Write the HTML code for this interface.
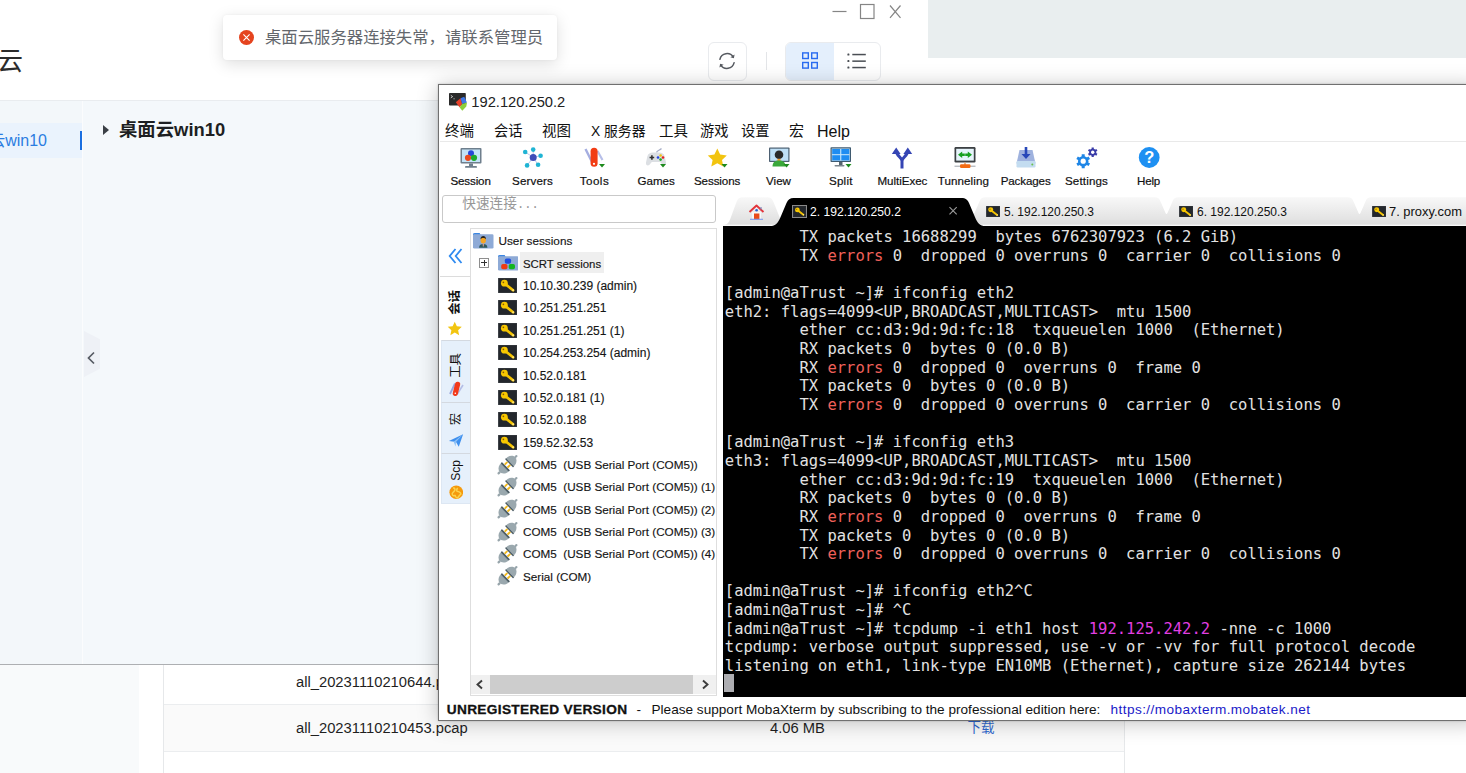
<!DOCTYPE html>
<html lang="zh-CN">
<head>
<meta charset="utf-8">
<title>桌面云</title>
<style>
*{box-sizing:border-box;margin:0;padding:0}
html,body{width:1466px;height:773px;overflow:hidden;background:#fff}
body{position:relative;font-family:"Liberation Sans","Noto Sans CJK SC",sans-serif;color:#222}
.abs{position:absolute}
/* ---------- cloud desktop app (background window) ---------- */
#app{position:absolute;left:0;top:0;width:906px;height:665px;background:#fff;border-bottom:1px solid #adafb2}
#app .hdr{position:absolute;left:0;top:0;width:906px;height:101px;background:#fff;border-bottom:1px solid #e9ecef}
#app .logo{position:absolute;left:-3px;top:43px;font-size:26px;line-height:36px;color:#2b2b2b}
#side{position:absolute;left:0;top:101px;width:83px;height:563px;background:#f3f7fa;border-right:1px solid #fbfcfd}
#side .sel{position:absolute;left:0;top:22px;width:82px;height:35px;background:#eaf3fd}
#side .sel span{position:absolute;right:35px;top:7px;font-size:16px;line-height:22px;color:#2a7de1;white-space:nowrap}
#side .bar{position:absolute;left:79.500px;top:30px;width:2.400px;height:19px;background:#1b6fe0}
#main{position:absolute;left:83px;top:101px;width:823px;height:563px;background:#f4f8fb}
#main .tri{position:absolute;left:20px;top:24px;width:0;height:0;border-left:6px solid #3a3f45;border-top:5px solid transparent;border-bottom:5px solid transparent}
#main .ttl{position:absolute;left:36px;top:16px;font-size:18.39px;font-weight:700;line-height:26px;color:#1d1f22;white-space:nowrap}
#main .handle{position:absolute;left:1px;top:230px;width:16px;height:46px;background:#eef1f6;clip-path:polygon(0 0,100% 18%,100% 82%,0 100%)}
/* toast */
#toast{position:absolute;left:223px;top:15px;width:334px;height:45px;background:#fff;border-radius:4px;box-shadow:0 4px 16px rgba(0,0,0,.13),0 0 3px rgba(0,0,0,.05)}
#toast .ic{position:absolute;left:15.800px;top:15px;width:15px;height:15px;border-radius:50%;background:#e5441f}
#toast .tx{position:absolute;left:42px;top:11px;font-size:16.38px;line-height:23px;color:#63676d;white-space:nowrap}
/* header buttons */
.btn{position:absolute;background:#fff;border:1px solid #e9ebee;border-radius:6px}
#gray{position:absolute;left:928px;top:0;width:538px;height:58px;background:#e9eeef}
/* ---------- bottom table ---------- */
#lpanel{position:absolute;left:0;top:665px;width:139px;height:108px;background:#f8fafb}
#tbl{position:absolute;left:163px;top:665px;width:961.500px;height:108px;border-left:1px solid #e6e8ea;border-right:1px solid #e6e8ea;background:#fff;font-size:14.75px;color:#1f1f1f}
#tbl .r{position:absolute;left:0;width:959.500px;border-bottom:1px solid #ebedef}
#tbl .c{position:absolute;white-space:nowrap;line-height:20px}
/* ---------- MobaXterm ---------- */
#moba{position:absolute;left:438px;top:84px;width:1040px;height:636.600px;background:#fff;border:1px solid #707070;box-shadow:0 2px 20px rgba(0,0,0,.24),0 0 2px rgba(0,0,0,.2)}
#moba .title{position:absolute;left:32.300px;top:7px;font-size:14.7px;line-height:20px;color:#222;white-space:nowrap}
#moba .menu{position:absolute;top:36px;font-size:14.5px;line-height:20px;color:#111;white-space:nowrap}
#moba .msep{position:absolute;left:1px;top:56px;width:1038px;height:1px;background:#e9e9e9}
.tb{position:absolute;top:88px;font-size:11.4px;line-height:16px;color:#111;white-space:nowrap;-webkit-text-stroke:.2px #111}
.tbi{position:absolute;top:61.500px;width:24px;height:22px;margin-left:-12px}
#qc{position:absolute;left:3.200px;top:110px;width:273.800px;height:28px;border:1px solid #c9c9c9;border-radius:3px;background:#fff}
#qc span{position:absolute;left:19px;top:0px;font-family:"Liberation Mono","Noto Sans CJK SC",monospace;font-size:13.600px;line-height:18px;color:#979797;white-space:nowrap;letter-spacing:.1px}
#qc span i{font-style:normal;font-size:12.100px;letter-spacing:0;margin-left:0}
#tree{position:absolute;left:31px;top:143px;width:247px;height:468px;border:1px solid #dedede;background:#fff;overflow:hidden}
#tree .row{position:absolute;left:0;height:22px;width:260px;font-size:11.6px;line-height:22px;color:#151515;white-space:nowrap;-webkit-text-stroke:.15px #151515}
#tree .row .t{position:absolute;left:53px;top:0}
#tree .row .i{position:absolute;left:27.300px;top:3px;width:19.200px;height:15px}
#term{position:absolute;left:284px;top:140.500px;width:760px;height:471.700px;background:#000;overflow:hidden}
#term pre{position:absolute;left:1.800px;top:2.500px;font-family:"DejaVu Sans Mono","Liberation Mono",monospace;font-size:15.5px;line-height:18.66px;color:#e2e2e2;white-space:pre}
#term .r{color:#f0605a}
#term .m{color:#e23ee2}
#term .cur{background:#adadb1;position:relative;top:-1.500px;left:-.5px}
#status{position:absolute;left:0;top:615.800px;height:18px;color:#111;white-space:nowrap}
#status>*{position:absolute;top:0;line-height:18px}
#status a{color:#1a1ac8;text-decoration:none}
#status b{-webkit-text-stroke:.3px #111}
/* tabs */
#tabs{position:absolute;left:280px;top:110px;width:760px;height:32px;background:#fff}
#tabs .tt{position:absolute;top:9px;font-size:12.1px;line-height:16px;color:#111;white-space:nowrap}
#tabs .ki{position:absolute;top:11px;width:14.200px;height:11px}
/* vertical tabs */
#vtabs{position:absolute;left:1px;top:144px;width:30px;height:467px}
.vt{position:absolute;left:0.500px;width:30px;background:#e6f0fb;border:1px solid #dde7f3;border-top-color:#d4d9e0}
.vtx{position:absolute;left:14.5px;font-size:12px;line-height:14px;color:#111;white-space:nowrap;transform-origin:0 0;transform:rotate(-90deg) translate(-100%,-50%)}
</style>
</head>
<body>
<div id="app">
  <div class="hdr"><div class="logo">云</div></div>
  <div id="side">
    <div class="sel"><span>桌面云win10</span></div>
    <div class="bar"></div>
  </div>
  <div id="main">
    <div class="tri"></div><div class="ttl">桌面云win10</div>
    <div class="handle"></div>
    <svg class="abs" style="left:3px;top:249.200px" width="10" height="16" viewBox="0 0 10 16"><path d="M8 2.500 L2.500 8 L8 13.500" fill="none" stroke="#565b63" stroke-width="1.700"/></svg>
  </div>
  <div class="btn" style="left:708px;top:42px;width:39px;height:39px">
    <svg class="abs" style="left:8.200px;top:7.600px" width="20" height="20" viewBox="0 0 20 20" fill="none" stroke="#565a60" stroke-width="1.500" stroke-linecap="round"><path d="M2.900 8.300A7.300 7.300 0 0 1 16.300 6.200"/><path d="M17.100 11.700A7.300 7.300 0 0 1 3.700 13.800"/><path d="M17.600 3.600l-.7 3.600-3.500-1z" fill="#565a60" stroke="none"/><path d="M2.400 16.400l.7-3.600 3.500 1z" fill="#565a60" stroke="none"/></svg>
  </div>
  <div class="abs" style="left:765.500px;top:52px;width:1px;height:18px;background:#e3e5e8"></div>
  <div class="btn" style="left:785px;top:42px;width:96px;height:39px;overflow:hidden">
    <div class="abs" style="left:0;top:0;width:48px;height:37px;background:#e4effc"></div>
    <svg class="abs" style="left:15px;top:8px" width="20" height="20" viewBox="0 0 20 20" fill="none" stroke="#2a6cf0" stroke-width="1.400"><rect x="1.700" y="1.900" width="5.600" height="5.600"/><rect x="10.700" y="1.900" width="5.600" height="5.600"/><rect x="1.700" y="11.500" width="5.600" height="5.600"/><rect x="10.700" y="11.500" width="5.600" height="5.600"/></svg>
    <svg class="abs" style="left:61px;top:8px" width="20" height="20" viewBox="0 0 20 20" fill="#4a4e54"><rect x="0.400" y="2.500" width="2" height="2" rx=".6"/><rect x="5.300" y="2.800" width="13.500" height="1.500"/><rect x="0.400" y="9.100" width="2" height="2" rx=".6"/><rect x="5.300" y="9.400" width="13.500" height="1.500"/><rect x="0.400" y="15.500" width="2" height="2" rx=".6"/><rect x="5.300" y="15.800" width="13.500" height="1.500"/></svg>
  </div>
  <svg class="abs" style="left:828px;top:0" width="80" height="24" viewBox="0 0 80 24" fill="none" stroke="#858585" stroke-width="1.200"><path d="M4.500 11.500h14"/><rect x="32.500" y="4.500" width="13.500" height="14"/><path d="M62 5.500l10.500 12.300M72.500 5.500l-10.500 12.300"/></svg>
</div>
<div id="gray"></div>
<div id="toast"><div class="ic"><svg width="15" height="15" viewBox="0 0 15 15" style="position:absolute;left:0;top:0"><path d="M4.400 4.400l6.200 6.200M10.600 4.400l-6.200 6.200" stroke="#fff" stroke-width="1.100" fill="none"/></svg></div><div class="tx">桌面云服务器连接失常，请联系管理员</div></div>
<div id="lpanel"></div>
<div id="tbl">
  <div class="r" style="top:0;height:40px"></div>
  <div class="r" style="top:40px;height:47px;background:#fafafa"></div>
  <div class="c" style="left:132px;top:7px">all_20231110210644.pcap</div>
  <div class="c" style="left:132px;top:53px">all_20231110210453.pcap</div>
  <div class="c" style="left:606px;top:53px">4.06 MB</div>
  <div class="c" style="left:803.500px;top:53px;color:#3069cf;font-size:13.500px">下载</div>
</div>
<div id="moba">
<svg class="abs" style="left:9.500px;top:7.500px" width="19" height="19" viewBox="0 0 19 19"><rect x="0" y="0" width="16.800" height="12.600" rx=".8" fill="#2a2a2a"/><path d="M1.800 2.300l1.800 1.300-1.800 1.300" stroke="#eee" stroke-width=".8" fill="none"/><path d="M4.300 5.800h1.600" stroke="#bbb" stroke-width=".7"/><path d="M6.800 9.300L11.500 5.300L13.200 11L10.500 14.300Z" fill="#e8402a"/><path d="M11.500 5.300L15.200 3.800L18 9.600L13.200 11Z" fill="#3f78e6"/><path d="M10.500 14.300L13.200 11L18 9.600L17.300 13.500L13.300 17.800Z" fill="#8ccf3c"/></svg><div class="title">192.120.250.2</div>
<div class="menu" style="left:6px;font-size:14.5px">终端</div><div class="menu" style="left:55px;font-size:14.25px">会话</div><div class="menu" style="left:103px;font-size:14.5px">视图</div><div class="menu" style="left:152px;font-size:13.82px">X 服务器</div><div class="menu" style="left:220px;font-size:14.5px">工具</div><div class="menu" style="left:261px;font-size:14.25px">游戏</div><div class="menu" style="left:302px;font-size:14.25px">设置</div><div class="menu" style="left:350px;font-size:15.0px">宏</div><div class="menu" style="left:378px;font-size:16.04px">Help</div>
<div class="msep"></div>
<div class="tb" style="left:11.5px;font-size:11.6px;letter-spacing:-0.153px">Session</div><svg class="tbi" style="left:31.6px" viewBox="0 0 24 22"><rect x="1.500" y="1" width="21" height="15.500" rx="1" fill="#6f7f8d"/><rect x="3" y="2.500" width="18" height="12.500" fill="#c3e3f8"/><rect x="10" y="16.500" width="4" height="2.800" fill="#6f7f8d"/><rect x="6" y="19" width="12" height="1.800" rx=".9" fill="#6f7f8d"/><circle cx="12" cy="6.300" r="3" fill="#2746d8"/><circle cx="9" cy="10.800" r="3.100" fill="#ea4a1f"/><circle cx="15" cy="10.800" r="3.100" fill="#1faa2b"/></svg>
<div class="tb" style="left:73px;font-size:11.6px;letter-spacing:0.148px">Servers</div><svg class="tbi" style="left:93.5px" viewBox="0 0 24 22"><g stroke="#b4bfe8" stroke-width=".9"><path d="M12.200 10.400L4.200 5M12.200 10.400L12.200 2.600M12.200 10.400L19.600 8.700M12.200 10.400L17.100 17.800M12.200 10.400L6.100 18.400"/></g><circle cx="12.200" cy="10.400" r="3.500" fill="#3f4db8"/><circle cx="4.200" cy="5" r="2.300" fill="#1fb4d4"/><circle cx="12.200" cy="2.600" r="2.300" fill="#1fb4d4"/><circle cx="19.600" cy="8.700" r="2.300" fill="#1fb4d4"/><circle cx="17.100" cy="17.800" r="2.300" fill="#1fb4d4"/><circle cx="6.100" cy="18.400" r="2.300" fill="#1fb4d4"/></svg>
<div class="tb" style="left:140.7px;font-size:11.6px;letter-spacing:0.484px">Tools</div><svg class="tbi" style="left:155.45px" viewBox="0 0 24 22"><path d="M3.500 2l6.500 13" stroke="#a5aee0" stroke-width="2.400"/><path d="M15.500 4l5 9" stroke="#b7bfe8" stroke-width="2.200"/><rect x="8.600" y="0.800" width="7" height="19" rx="3.500" fill="#f23c14"/><circle cx="12" cy="16.800" r="1.100" fill="#fff"/><path d="M17 17h6l-3 3.500z" fill="#1d8a1d"/></svg>
<div class="tb" style="left:198.6px;font-size:11.6px;letter-spacing:-0.058px">Games</div><svg class="tbi" style="left:217.15px" viewBox="0 0 24 22"><path d="M12.500 5.500c.5-2 3-2 5-4" stroke="#aab0c8" stroke-width="1.300" fill="none"/><path d="M3.300 9.500c.8-3 3-4 5.500-4h6.400c2.500 0 4.700 1 5.500 4l1.300 6c.5 2.500-1.800 4-3.500 2.200l-2.300-2.700h-8.400l-2.300 2.700c-1.700 1.800-4 .3-3.500-2.200z" fill="#dcdfe3"/><path d="M5.600 10.500h4.600M7.900 8.200v4.600" stroke="#333" stroke-width="1.600"/><circle cx="14" cy="10.500" r="1.300" fill="#2346e0"/><circle cx="16.600" cy="8.500" r="1.300" fill="#f1c40f"/><circle cx="19" cy="10.500" r="1.300" fill="#e6221e"/><circle cx="16.600" cy="12.600" r="1.300" fill="#1fa82a"/><path d="M16 17h6l-3 3.500z" fill="#1d8a1d"/></svg>
<div class="tb" style="left:255px;font-size:11.6px;letter-spacing:-0.109px">Sessions</div><svg class="tbi" style="left:278.1px" viewBox="0 0 24 22"><path d="M12.300 1.500l2.900 6.100 6.600.8-4.800 4.600 1.300 6.600-6-3.400-6 3.400 1.300-6.600-4.800-4.600 6.600-.8z" fill="#f2c40f"/><path d="M16.5 17h6l-3 3.500z" fill="#1d8a1d"/></svg>
<div class="tb" style="left:327px;font-size:11.6px;letter-spacing:0.016px">View</div><svg class="tbi" style="left:339.5px" viewBox="0 0 24 22"><rect x="2" y="0.500" width="20.500" height="14.500" rx=".8" fill="#4d6072"/><rect x="3.200" y="1.700" width="18.100" height="12.100" fill="#bfe0f7"/><circle cx="12" cy="7.800" r="4.300" fill="#2a2a2a"/><path d="M10.500 11.800h3v2.500h-3z" fill="#f09a2a"/><path d="M5.500 19.500c0-4.500 3-6 6.500-6s6.500 1.500 6.500 6z" fill="#3aa83a"/><path d="M16.5 17h6l-3 3.500z" fill="#1d8a1d"/></svg>
<div class="tb" style="left:390px;font-size:11.6px;letter-spacing:0.207px">Split</div><svg class="tbi" style="left:401.8px" viewBox="0 0 24 22"><rect x="1.500" y="0.300" width="20.500" height="14.700" rx=".8" fill="#3f5a70"/><rect x="2.700" y="1.500" width="18.100" height="12.300" fill="#cdeafc"/><rect x="3.200" y="2" width="8" height="5.200" fill="#1e8df2"/><rect x="12.300" y="2" width="8" height="5.200" fill="#1e8df2"/><rect x="3.200" y="8.200" width="8" height="5.200" fill="#1e8df2"/><rect x="12.300" y="8.200" width="8" height="5.200" fill="#1e8df2"/><rect x="10" y="15" width="3.500" height="3.500" fill="#56646e"/><rect x="5.500" y="18" width="10" height="1.600" rx=".8" fill="#7c868d"/><path d="M16.5 17h6l-3 3.500z" fill="#1d8a1d"/></svg>
<div class="tb" style="left:438.5px;font-size:11.6px;letter-spacing:-0.042px">MultiExec</div><svg class="tbi" style="left:463.45px" viewBox="0 0 24 22"><path d="M12 21.500v-8.500M12 14c0-4-5.800-4.500-5.800-10.500M12 14c0-4 5.800-4.500 5.800-10.500" stroke="#3545b4" stroke-width="3" fill="none"/><path d="M1.800 7l4.400-6.500 4.400 6.500z" fill="#3545b4"/><path d="M13.400 7l4.400-6.500 4.400 6.500z" fill="#3545b4"/></svg>
<div class="tb" style="left:498.7px;font-size:11.6px;letter-spacing:0.087px">Tunneling</div><svg class="tbi" style="left:525.85px" viewBox="0 0 24 22"><rect x="1.500" y="0" width="21" height="15.500" rx="1.200" fill="#3c4044"/><rect x="3.200" y="1.800" width="17.600" height="11.800" fill="#e6f4fb"/><path d="M5 7.800l4.200-3.300v2.100h2.600v2.400h-2.600v2.100z" fill="#18a020"/><path d="M19 7.800l-4.200-3.300v2.100h-2.600v2.400h2.600v2.100z" fill="#18a020"/><rect x="11.200" y="15.500" width="1.600" height="2.500" fill="#e8a06a"/><rect x="1.500" y="18.600" width="21" height="1.300" fill="#b4b9be"/><rect x="7" y="17.300" width="10.500" height="3.700" rx="1.200" fill="#f26a12"/></svg>
<div class="tb" style="left:561.7px;font-size:11.6px;letter-spacing:-0.13px">Packages</div><svg class="tbi" style="left:586.65px" viewBox="0 0 24 22"><path d="M5.500 3h13l3 13.500h-19z" fill="#9fb2de"/><rect x="2.500" y="14" width="19" height="6.500" rx="1.200" fill="#c3dcf0"/><circle cx="18.300" cy="17.500" r="1" fill="#6cc04a"/><path d="M10.700 0h2.600v7h3.200l-4.500 5-4.500-5h3.200z" fill="#2848b8"/></svg>
<div class="tb" style="left:626px;font-size:11.6px;letter-spacing:0.136px">Settings</div><svg class="tbi" style="left:647.5px" viewBox="0 0 24 22"><g fill="#1e86e6"><circle cx="8.200" cy="14.200" r="5.200"/><g stroke="#1e86e6" stroke-width="3"><path d="M8.200 7.200v14M2.100 10.700l12.200 7M2.100 17.700l12.200-7"/></g></g><circle cx="8.200" cy="14.200" r="2.600" fill="#fff"/><g fill="#3a3ca8"><circle cx="17.700" cy="5.300" r="3.500"/><g stroke="#3a3ca8" stroke-width="2.200"><path d="M17.700 .5v9.600M13.500 2.900l8.400 4.800M13.500 7.700l8.400-4.800"/></g></g><circle cx="17.700" cy="5.300" r="1.700" fill="#fff"/></svg>
<div class="tb" style="left:698px;font-size:11.6px;letter-spacing:-0.214px">Help</div><svg class="tbi" style="left:709.5px" viewBox="0 0 24 22"><circle cx="12.200" cy="10.500" r="10.400" fill="#1e90f2"/><text x="12.200" y="16.300" text-anchor="middle" font-family="Liberation Sans, sans-serif" font-weight="700" font-size="16.500" fill="#fff">?</text></svg>

<div id="qc"><span>快速连接<i>...</i></span></div>
<div id="tabs">
<svg class="abs" style="left:0;top:0" width="760" height="32" viewBox="0 0 760 32">
<defs><linearGradient id="tg2" x1="0" y1="0" x2="0" y2="1"><stop offset="0" stop-color="#f8f8f8"/><stop offset="1" stop-color="#dedede"/></linearGradient></defs>
<path d="M5.500 30 C9.500 29 10.500 26 12 22 L17.500 7 C19 3.500 20.500 2.200 23.500 2.200 L48.500 2.200 C51.500 2.200 53 3.500 54.500 7 L60.500 22 C62 26 63.500 29 67.500 30 Z" fill="url(#tg2)"/>
<rect x="245" y="2.200" width="515" height="27.800" fill="url(#tg2)"/>
<path d="M242.5 1.500 L242.5 2.200 C246.5 2.200 247.5 4 248.5 6.500 L253.5 18 Q254.5 20 255.5 18 L260.5 6.500 C261.5 4 262.5 2.200 266.5 2.200 L266.5 1.500 Z" fill="#fff"/><path d="M435.5 1.500 L435.5 2.200 C439.5 2.200 440.5 4 441.5 6.500 L446.5 18 Q447.5 20 448.5 18 L453.5 6.500 C454.5 4 455.5 2.200 459.5 2.200 L459.5 1.500 Z" fill="#fff"/><path d="M628.5 1.500 L628.5 2.200 C632.5 2.200 633.5 4 634.5 6.500 L639.5 18 Q640.5 20 641.5 18 L646.5 6.500 C647.5 4 648.5 2.200 652.5 2.200 L652.5 1.500 Z" fill="#fff"/>
<rect x="4" y="29.600" width="756" height="1" fill="#f4f4f4"/>
<path d="M53 31 C58 30 60 26 62 21 L67.500 8 C69 4.500 71 3 74.500 3 L242.500 3 C246.500 3 248.500 4.500 250 8 L255.500 21 C257.500 26 259.500 30 264.500 31 L264.500 32 L53 32 Z" fill="#000"/>
<path d="M230.500 12.200l7.200 7.200M237.700 12.200l-7.200 7.200" stroke="#9c9c9c" stroke-width="1.100"/>
</svg>
<svg class="abs" style="left:28.500px;top:8.500px" width="17" height="17" viewBox="0 0 17 17"><path d="M1.500 8L8.500 1.500l7 6.500" fill="none" stroke="#e2343a" stroke-width="1.900" stroke-linejoin="round"/><path d="M13 3v2.500" stroke="#7b8cc0" stroke-width="1.200"/><rect x="4" y="8" width="9" height="7" fill="#f7f7f7"/><rect x="6" y="9.500" width="5.400" height="6" fill="#ea4a1a"/><circle cx="8.600" cy="6.300" r="1.300" fill="#2a60d0"/><path d="M2 15.300h13" stroke="#7f9cf0" stroke-width="1.100"/></svg>
<svg class="ki" style="left:73.29999999999995px;top:10px;width:15.200px;height:13px;border:1px solid #8a8a8a" viewBox="0 0 19 15"><rect width="19" height="15" fill="#3a3e44"/><rect x=".6" y=".6" width="17.800" height="13.800" fill="#23272c"/><path d="M8 6.800L15 12.200" stroke="#f5c400" stroke-width="2.700" stroke-linecap="round"/><circle cx="6.300" cy="5.200" r="3.400" fill="#f8c800"/><circle cx="5.300" cy="4.300" r=".85" fill="#8a5a00"/><circle cx="15" cy="12.200" r="1" fill="#ffe680"/></svg><span class="tt" style="left:91px;color:#fff;font-size:12.12px">2. 192.120.250.2</span>
<svg class="ki" style="left:267px" viewBox="0 0 19 15"><rect width="19" height="15" fill="#3a3e44"/><rect x=".6" y=".6" width="17.800" height="13.800" fill="#23272c"/><path d="M8 6.800L15 12.200" stroke="#f5c400" stroke-width="2.700" stroke-linecap="round"/><circle cx="6.300" cy="5.200" r="3.400" fill="#f8c800"/><circle cx="5.300" cy="4.300" r=".85" fill="#8a5a00"/><circle cx="15" cy="12.200" r="1" fill="#ffe680"/></svg><span class="tt" style="left:285px;font-size:11.99px">5. 192.120.250.3</span>
<svg class="ki" style="left:460px" viewBox="0 0 19 15"><rect width="19" height="15" fill="#3a3e44"/><rect x=".6" y=".6" width="17.800" height="13.800" fill="#23272c"/><path d="M8 6.800L15 12.200" stroke="#f5c400" stroke-width="2.700" stroke-linecap="round"/><circle cx="6.300" cy="5.200" r="3.400" fill="#f8c800"/><circle cx="5.300" cy="4.300" r=".85" fill="#8a5a00"/><circle cx="15" cy="12.200" r="1" fill="#ffe680"/></svg><span class="tt" style="left:478px;font-size:11.99px">6. 192.120.250.3</span>
<svg class="ki" style="left:653px" viewBox="0 0 19 15"><rect width="19" height="15" fill="#3a3e44"/><rect x=".6" y=".6" width="17.800" height="13.800" fill="#23272c"/><path d="M8 6.800L15 12.200" stroke="#f5c400" stroke-width="2.700" stroke-linecap="round"/><circle cx="6.300" cy="5.200" r="3.400" fill="#f8c800"/><circle cx="5.300" cy="4.300" r=".85" fill="#8a5a00"/><circle cx="15" cy="12.200" r="1" fill="#ffe680"/></svg><span class="tt" style="left:670px;font-size:12.92px">7. proxy.com</span>
</div>
<div id="vtabs">
<svg class="abs" style="left:8px;top:18px" width="16" height="18" viewBox="0 0 16 18" fill="none" stroke="#2e8af0" stroke-width="1.800"><path d="M7.500 2L1.700 9l5.800 7M13.500 2L7.700 9l5.800 7"/></svg>
<div class="abs" style="left:0;top:47px;width:30px;height:1px;background:#dcdcdc"></div>
<div class="vtx" style="top:60.500px;font-weight:700;font-size:12.400px">会话</div>
<svg class="abs" style="left:6.800px;top:92px" width="15.500" height="15.500" viewBox="0 0 17 17"><path d="M8.500 .8l2.300 5 5.400.6-4 3.700 1.100 5.400-4.800-2.800-4.800 2.800 1.100-5.400-4-3.700 5.400-.6z" fill="#f2c511"/></svg>
<div class="vt" style="top:111px;height:63px"></div>
<div class="vtx" style="top:124px;left:15.500px;font-size:12.400px">工具</div>
<svg class="abs" style="left:6px;top:150px" width="20" height="20" viewBox="0 0 20 20"><path d="M4 15L9 4.500" stroke="#9aa6dc" stroke-width="1.800"/><path d="M11 15.500L17 6" stroke="#b4bde6" stroke-width="1.600"/><rect x="7.800" y="2.500" width="5.200" height="14.500" rx="2.600" fill="#f2391a" transform="rotate(14 10 10)"/><circle cx="9.300" cy="14.300" r=".8" fill="#fff"/></svg>
<div class="vt" style="top:173px;height:52px"></div>
<div class="vtx" style="top:184px;left:15.500px">宏</div>
<svg class="abs" style="left:8px;top:204px" width="16" height="15" viewBox="0 0 20 19"><path d="M1 10L19 1.500l-5.500 16-3.500-6z" fill="#3f90ee"/><path d="M19 1.500L10 11.500l-.5 5.500L7 11z" fill="#8cc0f6"/></svg>
<div class="vt" style="top:224px;height:50.500px"></div>
<div class="vtx" style="top:231px;left:15.500px">Scp</div>
<svg class="abs" style="left:8.500px;top:256px" width="14.500" height="14.500" viewBox="0 0 18 18"><circle cx="9" cy="9" r="8.500" fill="#f59a0c"/><path d="M5 4c2-1 3 1 2 3s-3 2-3 4 2 3 3 2 1 3 3 3 2-3 4-4-1-4-3-4-2-3 0-4" fill="none" stroke="#fbd34d" stroke-width="1.900"/></svg>
</div>
<div id="tree">
<div class="row" style="top:1.3px"><svg class="i" style="left:2.300px;top:1.700px;width:20.500px;height:17px" viewBox="0 0 21 17"><path d="M0 3a2 2 0 0 1 2-2.300h4.800l1.400 2.800h-8.200z" fill="#3a86e2"/><rect x="0" y="2.200" width="21" height="14.500" rx="1.300" fill="#8eaad6"/><path d="M6.200 15.800c.3-2.800 1.800-3.600 4.300-3.600s4 .8 4.300 3.600z" fill="#2f5a5e"/><path d="M9.900 11.800h1.200l-.2 2.800h-.8z" fill="#f4a6a0"/><ellipse cx="10.500" cy="8.300" rx="2.700" ry="3.300" fill="#f5a524"/><path d="M7.700 7.300c0-2.400 1.300-3.300 2.800-3.300s2.800.9 2.800 3.300c-.8-1-1.700-1.300-2.800-1.300s-2 .3-2.800 1.300z" fill="#2b2620"/></svg><span class="t" style="left:27.500px;font-size:11.750px">User sessions</span></div>
<div class="row" style="top:23.67px"><span class="abs" style="left:7.800px;top:5px;width:10.500px;height:10.500px;border:1px solid #8e8e8e;background:#fff"></span><span class="abs" style="left:10px;top:9.750px;width:6px;height:1px;background:#333"></span><span class="abs" style="left:12.500px;top:7.250px;width:1px;height:6px;background:#333"></span><svg class="i" style="left:26.800px;top:1.700px;width:20.500px;height:17px" viewBox="0 0 21 17"><path d="M0 3a2 2 0 0 1 2-2.300h4.800l1.400 2.800h-8.200z" fill="#3a86e2"/><rect x="0" y="2.200" width="21" height="14.500" rx="1.300" fill="#8eaad6"/><rect x="7" y="4.300" width="6.400" height="5.500" rx="1.800" fill="#1f4fe0"/><rect x="3.300" y="10" width="6.400" height="5.500" rx="1.800" fill="#ee3a12"/><rect x="11" y="10" width="6.400" height="5.500" rx="1.800" fill="#12b51e"/></svg><span class="abs" style="left:49px;top:-1px;width:84px;height:21.500px;background:#efefef"></span><span class="t" style="left:52px;font-size:11.400px">SCRT sessions</span></div>
<div class="row" style="top:46.04px"><svg class="i" style="" viewBox="0 0 19 15"><rect width="19" height="15" fill="#3a3e44"/><rect x=".6" y=".6" width="17.800" height="13.800" fill="#23272c"/><path d="M8 6.800L15 12.200" stroke="#f5c400" stroke-width="2.700" stroke-linecap="round"/><circle cx="6.300" cy="5.200" r="3.400" fill="#f8c800"/><circle cx="5.300" cy="4.300" r=".85" fill="#8a5a00"/><circle cx="15" cy="12.200" r="1" fill="#ffe680"/></svg><span class="t" style="left:52px;font-size:12px">10.10.30.239 (admin)</span></div>
<div class="row" style="top:68.41px"><svg class="i" style="" viewBox="0 0 19 15"><rect width="19" height="15" fill="#3a3e44"/><rect x=".6" y=".6" width="17.800" height="13.800" fill="#23272c"/><path d="M8 6.800L15 12.200" stroke="#f5c400" stroke-width="2.700" stroke-linecap="round"/><circle cx="6.300" cy="5.200" r="3.400" fill="#f8c800"/><circle cx="5.300" cy="4.300" r=".85" fill="#8a5a00"/><circle cx="15" cy="12.200" r="1" fill="#ffe680"/></svg><span class="t" style="left:52px;font-size:12px">10.251.251.251</span></div>
<div class="row" style="top:90.78px"><svg class="i" style="" viewBox="0 0 19 15"><rect width="19" height="15" fill="#3a3e44"/><rect x=".6" y=".6" width="17.800" height="13.800" fill="#23272c"/><path d="M8 6.800L15 12.200" stroke="#f5c400" stroke-width="2.700" stroke-linecap="round"/><circle cx="6.300" cy="5.200" r="3.400" fill="#f8c800"/><circle cx="5.300" cy="4.300" r=".85" fill="#8a5a00"/><circle cx="15" cy="12.200" r="1" fill="#ffe680"/></svg><span class="t" style="left:52px;font-size:12px">10.251.251.251 (1)</span></div>
<div class="row" style="top:113.15px"><svg class="i" style="" viewBox="0 0 19 15"><rect width="19" height="15" fill="#3a3e44"/><rect x=".6" y=".6" width="17.800" height="13.800" fill="#23272c"/><path d="M8 6.800L15 12.200" stroke="#f5c400" stroke-width="2.700" stroke-linecap="round"/><circle cx="6.300" cy="5.200" r="3.400" fill="#f8c800"/><circle cx="5.300" cy="4.300" r=".85" fill="#8a5a00"/><circle cx="15" cy="12.200" r="1" fill="#ffe680"/></svg><span class="t" style="left:52px;font-size:12px">10.254.253.254 (admin)</span></div>
<div class="row" style="top:135.52px"><svg class="i" style="" viewBox="0 0 19 15"><rect width="19" height="15" fill="#3a3e44"/><rect x=".6" y=".6" width="17.800" height="13.800" fill="#23272c"/><path d="M8 6.800L15 12.200" stroke="#f5c400" stroke-width="2.700" stroke-linecap="round"/><circle cx="6.300" cy="5.200" r="3.400" fill="#f8c800"/><circle cx="5.300" cy="4.300" r=".85" fill="#8a5a00"/><circle cx="15" cy="12.200" r="1" fill="#ffe680"/></svg><span class="t" style="left:52px;font-size:12px">10.52.0.181</span></div>
<div class="row" style="top:157.89px"><svg class="i" style="" viewBox="0 0 19 15"><rect width="19" height="15" fill="#3a3e44"/><rect x=".6" y=".6" width="17.800" height="13.800" fill="#23272c"/><path d="M8 6.800L15 12.200" stroke="#f5c400" stroke-width="2.700" stroke-linecap="round"/><circle cx="6.300" cy="5.200" r="3.400" fill="#f8c800"/><circle cx="5.300" cy="4.300" r=".85" fill="#8a5a00"/><circle cx="15" cy="12.200" r="1" fill="#ffe680"/></svg><span class="t" style="left:52px;font-size:12px">10.52.0.181 (1)</span></div>
<div class="row" style="top:180.26px"><svg class="i" style="" viewBox="0 0 19 15"><rect width="19" height="15" fill="#3a3e44"/><rect x=".6" y=".6" width="17.800" height="13.800" fill="#23272c"/><path d="M8 6.800L15 12.200" stroke="#f5c400" stroke-width="2.700" stroke-linecap="round"/><circle cx="6.300" cy="5.200" r="3.400" fill="#f8c800"/><circle cx="5.300" cy="4.300" r=".85" fill="#8a5a00"/><circle cx="15" cy="12.200" r="1" fill="#ffe680"/></svg><span class="t" style="left:52px;font-size:12px">10.52.0.188</span></div>
<div class="row" style="top:202.63px"><svg class="i" style="" viewBox="0 0 19 15"><rect width="19" height="15" fill="#3a3e44"/><rect x=".6" y=".6" width="17.800" height="13.800" fill="#23272c"/><path d="M8 6.800L15 12.200" stroke="#f5c400" stroke-width="2.700" stroke-linecap="round"/><circle cx="6.300" cy="5.200" r="3.400" fill="#f8c800"/><circle cx="5.300" cy="4.300" r=".85" fill="#8a5a00"/><circle cx="15" cy="12.200" r="1" fill="#ffe680"/></svg><span class="t" style="left:52px;font-size:12px">159.52.32.53</span></div>
<div class="row" style="top:225.0px"><svg class="i" style="left:26.200px;top:-0.500px;width:21px;height:21px;overflow:visible" viewBox="0 0 21 21"><g transform="translate(10.500 10.700) rotate(-44) translate(-13.500 0)"><rect x="0" y="-1.100" width="3.500" height="2.200" rx="1" fill="#97a5ab"/><path d="M3 -1.500C4.500 -4.500 7 -5.600 10 -5.600L10 5.600C7 5.600 4.500 4.500 3 1.500Z" fill="#9aa8ae"/><rect x="9.600" y="-5.800" width="1.800" height="11.600" rx=".6" fill="#4e5e66"/><rect x="11.400" y="-3" width="4.200" height="1.900" rx=".9" fill="#f2b91a"/><rect x="11.400" y="1.100" width="4.200" height="1.900" rx=".9" fill="#f2b91a"/><rect x="15.600" y="-5.800" width="1.800" height="11.600" rx=".6" fill="#4e5e66"/><path d="M24 -1.500C22.500 -4.500 20 -5.600 17 -5.600L17 5.600C20 5.600 22.500 4.500 24 1.500Z" fill="#9aa8ae"/><rect x="23.500" y="-1.100" width="3.500" height="2.200" rx="1" fill="#97a5ab"/></g></svg><span class="t" style="left:52px;font-size:11.700px">COM5&nbsp; (USB Serial Port (COM5))</span></div>
<div class="row" style="top:247.37px"><svg class="i" style="left:26.200px;top:-0.500px;width:21px;height:21px;overflow:visible" viewBox="0 0 21 21"><g transform="translate(10.500 10.700) rotate(-44) translate(-13.500 0)"><rect x="0" y="-1.100" width="3.500" height="2.200" rx="1" fill="#97a5ab"/><path d="M3 -1.500C4.500 -4.500 7 -5.600 10 -5.600L10 5.600C7 5.600 4.500 4.500 3 1.500Z" fill="#9aa8ae"/><rect x="9.600" y="-5.800" width="1.800" height="11.600" rx=".6" fill="#4e5e66"/><rect x="11.400" y="-3" width="4.200" height="1.900" rx=".9" fill="#f2b91a"/><rect x="11.400" y="1.100" width="4.200" height="1.900" rx=".9" fill="#f2b91a"/><rect x="15.600" y="-5.800" width="1.800" height="11.600" rx=".6" fill="#4e5e66"/><path d="M24 -1.500C22.500 -4.500 20 -5.600 17 -5.600L17 5.600C20 5.600 22.500 4.500 24 1.500Z" fill="#9aa8ae"/><rect x="23.500" y="-1.100" width="3.500" height="2.200" rx="1" fill="#97a5ab"/></g></svg><span class="t" style="left:52px;font-size:11.700px">COM5&nbsp; (USB Serial Port (COM5)) (1)</span></div>
<div class="row" style="top:269.74px"><svg class="i" style="left:26.200px;top:-0.500px;width:21px;height:21px;overflow:visible" viewBox="0 0 21 21"><g transform="translate(10.500 10.700) rotate(-44) translate(-13.500 0)"><rect x="0" y="-1.100" width="3.500" height="2.200" rx="1" fill="#97a5ab"/><path d="M3 -1.500C4.500 -4.500 7 -5.600 10 -5.600L10 5.600C7 5.600 4.500 4.500 3 1.500Z" fill="#9aa8ae"/><rect x="9.600" y="-5.800" width="1.800" height="11.600" rx=".6" fill="#4e5e66"/><rect x="11.400" y="-3" width="4.200" height="1.900" rx=".9" fill="#f2b91a"/><rect x="11.400" y="1.100" width="4.200" height="1.900" rx=".9" fill="#f2b91a"/><rect x="15.600" y="-5.800" width="1.800" height="11.600" rx=".6" fill="#4e5e66"/><path d="M24 -1.500C22.500 -4.500 20 -5.600 17 -5.600L17 5.600C20 5.600 22.500 4.500 24 1.500Z" fill="#9aa8ae"/><rect x="23.500" y="-1.100" width="3.500" height="2.200" rx="1" fill="#97a5ab"/></g></svg><span class="t" style="left:52px;font-size:11.700px">COM5&nbsp; (USB Serial Port (COM5)) (2)</span></div>
<div class="row" style="top:292.11px"><svg class="i" style="left:26.200px;top:-0.500px;width:21px;height:21px;overflow:visible" viewBox="0 0 21 21"><g transform="translate(10.500 10.700) rotate(-44) translate(-13.500 0)"><rect x="0" y="-1.100" width="3.500" height="2.200" rx="1" fill="#97a5ab"/><path d="M3 -1.500C4.500 -4.500 7 -5.600 10 -5.600L10 5.600C7 5.600 4.500 4.500 3 1.500Z" fill="#9aa8ae"/><rect x="9.600" y="-5.800" width="1.800" height="11.600" rx=".6" fill="#4e5e66"/><rect x="11.400" y="-3" width="4.200" height="1.900" rx=".9" fill="#f2b91a"/><rect x="11.400" y="1.100" width="4.200" height="1.900" rx=".9" fill="#f2b91a"/><rect x="15.600" y="-5.800" width="1.800" height="11.600" rx=".6" fill="#4e5e66"/><path d="M24 -1.500C22.500 -4.500 20 -5.600 17 -5.600L17 5.600C20 5.600 22.500 4.500 24 1.500Z" fill="#9aa8ae"/><rect x="23.500" y="-1.100" width="3.500" height="2.200" rx="1" fill="#97a5ab"/></g></svg><span class="t" style="left:52px;font-size:11.700px">COM5&nbsp; (USB Serial Port (COM5)) (3)</span></div>
<div class="row" style="top:314.48px"><svg class="i" style="left:26.200px;top:-0.500px;width:21px;height:21px;overflow:visible" viewBox="0 0 21 21"><g transform="translate(10.500 10.700) rotate(-44) translate(-13.500 0)"><rect x="0" y="-1.100" width="3.500" height="2.200" rx="1" fill="#97a5ab"/><path d="M3 -1.500C4.500 -4.500 7 -5.600 10 -5.600L10 5.600C7 5.600 4.500 4.500 3 1.500Z" fill="#9aa8ae"/><rect x="9.600" y="-5.800" width="1.800" height="11.600" rx=".6" fill="#4e5e66"/><rect x="11.400" y="-3" width="4.200" height="1.900" rx=".9" fill="#f2b91a"/><rect x="11.400" y="1.100" width="4.200" height="1.900" rx=".9" fill="#f2b91a"/><rect x="15.600" y="-5.800" width="1.800" height="11.600" rx=".6" fill="#4e5e66"/><path d="M24 -1.500C22.500 -4.500 20 -5.600 17 -5.600L17 5.600C20 5.600 22.500 4.500 24 1.500Z" fill="#9aa8ae"/><rect x="23.500" y="-1.100" width="3.500" height="2.200" rx="1" fill="#97a5ab"/></g></svg><span class="t" style="left:52px;font-size:11.700px">COM5&nbsp; (USB Serial Port (COM5)) (4)</span></div>
<div class="row" style="top:336.85px"><svg class="i" style="left:26.200px;top:-0.500px;width:21px;height:21px;overflow:visible" viewBox="0 0 21 21"><g transform="translate(10.500 10.700) rotate(-44) translate(-13.500 0)"><rect x="0" y="-1.100" width="3.500" height="2.200" rx="1" fill="#97a5ab"/><path d="M3 -1.500C4.500 -4.500 7 -5.600 10 -5.600L10 5.600C7 5.600 4.500 4.500 3 1.500Z" fill="#9aa8ae"/><rect x="9.600" y="-5.800" width="1.800" height="11.600" rx=".6" fill="#4e5e66"/><rect x="11.400" y="-3" width="4.200" height="1.900" rx=".9" fill="#f2b91a"/><rect x="11.400" y="1.100" width="4.200" height="1.900" rx=".9" fill="#f2b91a"/><rect x="15.600" y="-5.800" width="1.800" height="11.600" rx=".6" fill="#4e5e66"/><path d="M24 -1.500C22.500 -4.500 20 -5.600 17 -5.600L17 5.600C20 5.600 22.500 4.500 24 1.500Z" fill="#9aa8ae"/><rect x="23.500" y="-1.100" width="3.500" height="2.200" rx="1" fill="#97a5ab"/></g></svg><span class="t" style="left:52px;font-size:11.700px">Serial (COM)</span></div>
<div class="abs" style="left:0;top:446px;width:245px;height:18.500px;background:#f0f0f0"></div>
<div class="abs" style="left:19px;top:446px;width:203px;height:18.500px;background:#cdcdcd"></div>
<svg class="abs" style="left:4px;top:450px" width="10" height="11" viewBox="0 0 10 11"><path d="M7 1.500L2.500 5.500L7 9.500" fill="none" stroke="#3c3c3c" stroke-width="1.900"/></svg>
<svg class="abs" style="left:229px;top:450px" width="10" height="11" viewBox="0 0 10 11"><path d="M3 1.500L7.500 5.500L3 9.500" fill="none" stroke="#3c3c3c" stroke-width="1.900"/></svg>
</div>
<div id="term"><pre>        TX packets 16688299  bytes 6762307923 (6.2 GiB)
        TX <span class="r">errors</span> 0  dropped 0 overruns 0  carrier 0  collisions 0

[admin@aTrust ~]# ifconfig eth2
eth2: flags=4099&lt;UP,BROADCAST,MULTICAST&gt;  mtu 1500
        ether cc:d3:9d:9d:fc:18  txqueuelen 1000  (Ethernet)
        RX packets 0  bytes 0 (0.0 B)
        RX <span class="r">errors</span> 0  dropped 0  overruns 0  frame 0
        TX packets 0  bytes 0 (0.0 B)
        TX <span class="r">errors</span> 0  dropped 0 overruns 0  carrier 0  collisions 0

[admin@aTrust ~]# ifconfig eth3
eth3: flags=4099&lt;UP,BROADCAST,MULTICAST&gt;  mtu 1500
        ether cc:d3:9d:9d:fc:19  txqueuelen 1000  (Ethernet)
        RX packets 0  bytes 0 (0.0 B)
        RX <span class="r">errors</span> 0  dropped 0  overruns 0  frame 0
        TX packets 0  bytes 0 (0.0 B)
        TX <span class="r">errors</span> 0  dropped 0 overruns 0  carrier 0  collisions 0

[admin@aTrust ~]# ifconfig eth2^C
[admin@aTrust ~]# ^C
[admin@aTrust ~]# tcpdump -i eth1 host <span class="m">192.125.242.2</span> -nne -c 1000
tcpdump: verbose output suppressed, use -v or -vv for full protocol decode
listening on eth1, link-type EN10MB (Ethernet), capture size 262144 bytes
<span class="cur"> </span></pre></div>
<div id="status"><b style="left:7.75px;font-size:13.700px;letter-spacing:0.321px">UNREGISTERED VERSION</b><span style="left:197.5px;font-size:13.6px">-</span><span style="left:212.5px;font-size:13.6px">Please support MobaXterm by subscribing to the professional edition here:</span><a style="left:671.5px;font-size:13.600px;letter-spacing:0.432px">https://mobaxterm.mobatek.net</a></div>
</div>
</body>
</html>
